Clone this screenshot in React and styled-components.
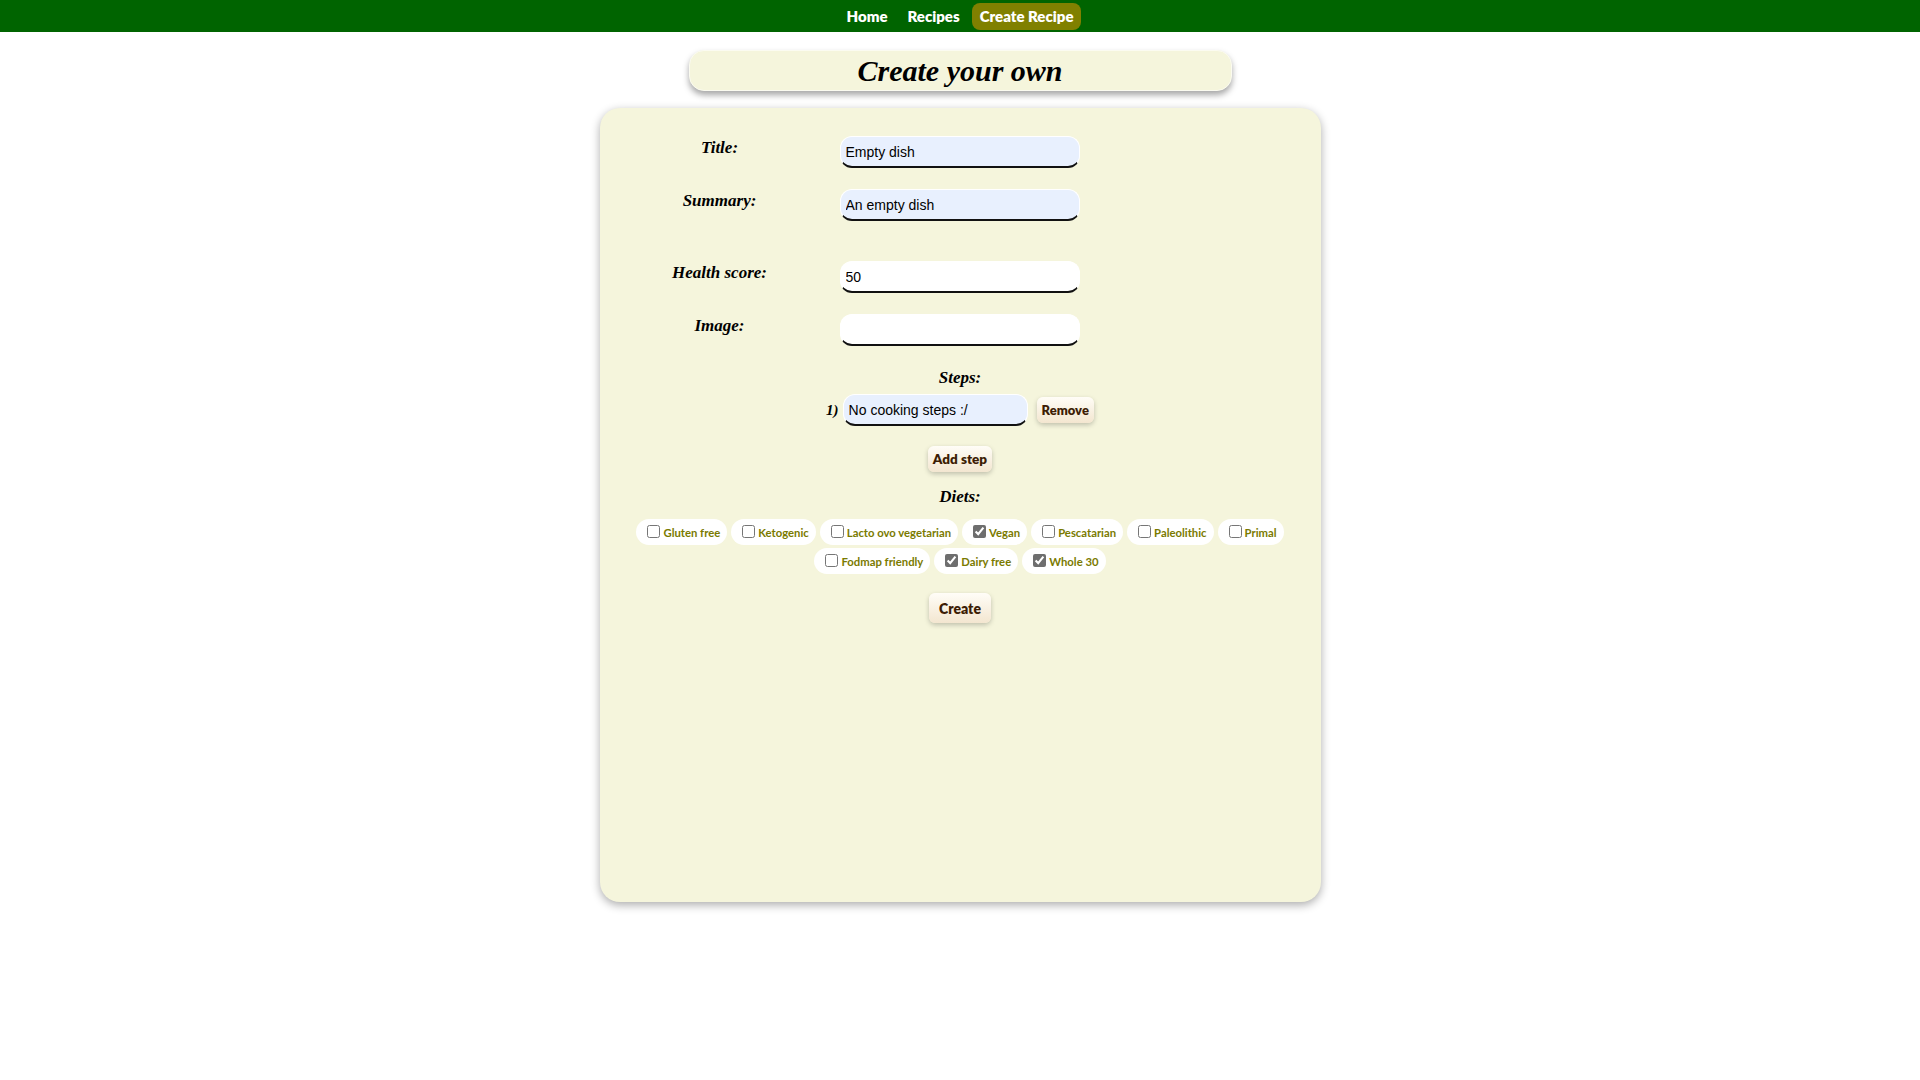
import React from "react";
import styled, { createGlobalStyle } from "styled-components";

const GlobalStyle = createGlobalStyle`
  html, body { margin: 0; padding: 0; background: #ffffff; }
  body { font-family: Lato, "Noto Sans", sans-serif; }
`;

const Nav = styled.nav`
  height: 32px;
  background: #006400;
  display: flex;
  justify-content: center;
  align-items: center;
  gap: 4px;
`;

const NavLink = styled.a`
  display: block;
  padding: 4px 8px;
  border-radius: 8px;
  font: 800 15px/19px Lato, sans-serif;
  color: #ffffff;
  text-decoration: none;
  background: ${(p) => (p.$active ? "#808000" : "transparent")};
`;

const Page = styled.main`
  display: flex;
  flex-direction: column;
  align-items: center;
`;

const TitleBox = styled.h1`
  box-sizing: border-box;
  width: 543px;
  height: 41px;
  margin: 18px 0 0;
  padding-top: 4px;
  text-align: center;
  background: #f5f5dc;
  border: 1px solid #fbfbf0;
  border-radius: 15px;
  box-shadow: 0 4px 6px rgba(0, 0, 0, 0.35);
  font: italic 700 30px/32px "Liberation Serif", serif;
  color: #000;
`;

const Card = styled.form`
  box-sizing: border-box;
  width: 721px;
  height: 794px;
  margin: 17px 0 40px;
  padding-top: 28px;
  background: #f5f5dc;
  border-radius: 20px;
  box-shadow: 0 3px 10px rgba(0, 0, 0, 0.33);
  display: flex;
  flex-direction: column;
`;

const FieldRow = styled.div`
  display: grid;
  grid-template-columns: 240px 240px 1fr;
  margin-bottom: ${(p) => p.$gap}px;
`;

const Label = styled.label`
  text-align: center;
  padding-top: 2px;
  font: italic 700 17px/20px "Liberation Serif", serif;
  color: #000;
`;

const TextInput = styled.input`
  box-sizing: border-box;
  width: ${(p) => p.$width || 240}px;
  height: 32px;
  margin: 0;
  padding: 0 5px;
  border: 1px solid #ffffff;
  border-bottom: 2px solid #111;
  border-radius: 12px;
  background: ${(p) => (p.$filled ? "#e8f0fe" : "#ffffff")};
  font: 14px "Liberation Sans", Arial, sans-serif;
  color: #000;
  outline: none;
`;

const SectionTitle = styled.div`
  text-align: center;
  font: italic 700 17px/20px "Liberation Serif", serif;
  color: #000;
  margin-top: ${(p) => p.$top}px;
`;

const StepRow = styled.div`
  display: flex;
  justify-content: center;
  align-items: center;
  margin-top: 6px;
`;

const StepNum = styled.span`
  font: italic 700 15px/20px "Liberation Serif", serif;
  margin-right: 4px;
`;

const Button = styled.button`
  box-sizing: border-box;
  height: ${(p) => (p.$big ? 30 : 26)}px;
  padding: 0 ${(p) => (p.$big ? 10 : 5)}px;
  margin: 0;
  border: none;
  border-radius: 6px;
  background: linear-gradient(#fffdf7, #f3e6d0);
  box-shadow: 0 2px 5px rgba(0, 0, 0, 0.22);
  font: 800 ${(p) => (p.$size || 13)}px Lato, sans-serif;
  color: #3d1d05;
  cursor: pointer;
`;

const RemoveButton = styled(Button)`
  margin-left: 9px;
`;

const Centered = styled.div`
  display: flex;
  justify-content: center;
  margin-top: ${(p) => p.$top}px;
`;

const Chips = styled.div`
  display: flex;
  flex-wrap: wrap;
  justify-content: center;
  gap: 3px 4px;
  padding: 0 10px;
  margin-top: 12px;
`;

const Chip = styled.label`
  box-sizing: border-box;
  height: 26px;
  display: flex;
  align-items: center;
  padding: 0 7px;
  background: #ffffff;
  border-radius: 13px;
  font: 700 11.3px Lato, sans-serif;
  color: #7a7a00;
`;

const Check = styled.input`
  width: 13px;
  height: 13px;
  margin: 0 3px 2px 4px;
  accent-color: #6e6e6e;
`;

const diets = [
  ["Gluten free", false],
  ["Ketogenic", false],
  ["Lacto ovo vegetarian", false],
  ["Vegan", true],
  ["Pescatarian", false],
  ["Paleolithic", false],
  ["Primal", false],
  ["Fodmap friendly", false],
  ["Dairy free", true],
  ["Whole 30", true],
];

export default function App() {
  return (
    <>
      <GlobalStyle />
      <Nav>
        <NavLink href="#">Home</NavLink>
        <NavLink href="#">Recipes</NavLink>
        <NavLink href="#" $active>Create Recipe</NavLink>
      </Nav>
      <Page>
        <TitleBox>Create your own</TitleBox>
        <Card onSubmit={(e) => e.preventDefault()}>
          <FieldRow $gap={21}>
            <Label>Title:</Label>
            <TextInput defaultValue="Empty dish" $filled />
          </FieldRow>
          <FieldRow $gap={40}>
            <Label>Summary:</Label>
            <TextInput defaultValue="An empty dish" $filled />
          </FieldRow>
          <FieldRow $gap={21}>
            <Label>Health score:</Label>
            <TextInput defaultValue="50" />
          </FieldRow>
          <FieldRow $gap={0}>
            <Label>Image:</Label>
            <TextInput defaultValue="" />
          </FieldRow>
          <SectionTitle $top={22}>Steps:</SectionTitle>
          <StepRow>
            <StepNum>1)</StepNum>
            <TextInput $width={185} defaultValue="No cooking steps :/" $filled />
            <RemoveButton type="button">Remove</RemoveButton>
          </StepRow>
          <Centered $top={20}>
            <Button type="button" $size={13.5}>Add step</Button>
          </Centered>
          <SectionTitle $top={15}>Diets:</SectionTitle>
          <Chips>
            {diets.map(([name, checked]) => (
              <Chip key={name}>
                <Check type="checkbox" defaultChecked={checked} />
                {name}
              </Chip>
            ))}
          </Chips>
          <Centered $top={19}>
            <Button type="submit" $big $size={14}>Create</Button>
          </Centered>
        </Card>
      </Page>
    </>
  );
}
